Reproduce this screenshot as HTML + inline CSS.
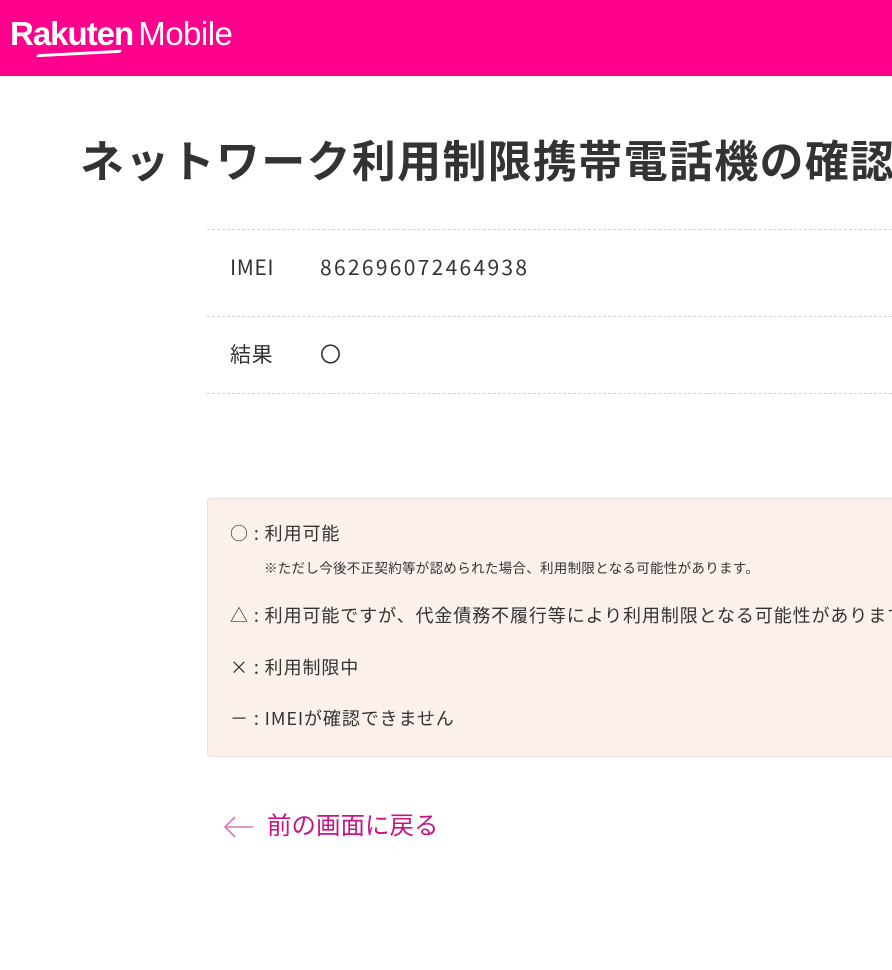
<!DOCTYPE html>
<html><head><meta charset="utf-8"><style>
body{margin:0;width:892px;height:970px;overflow:hidden;background:#fff;font-family:"Noto Sans CJK JP","Liberation Sans",sans-serif;color:#333}
.hd{height:76px;background:#ff008c;position:relative}
.logo{position:absolute;left:10px;top:15px;color:#fff;font-size:33px;letter-spacing:-1px;white-space:nowrap;font-family:"Liberation Sans",sans-serif}
.logo b{font-weight:bold}
.logo span{font-weight:normal;margin-left:5px;letter-spacing:-0.5px}
.sw{position:absolute;left:38px;top:52px;width:82px;height:3px;background:#fff;transform:skewX(-30deg) rotate(-3deg);border-radius:2px}
h1{position:absolute;left:80px;top:128px;margin:0;font-size:44px;font-weight:bold;white-space:nowrap;color:#333;letter-spacing:1.3px;line-height:60px}
.row{position:absolute;left:207px;right:0;border-top:1px dashed #d4d4d4;font-size:21px;letter-spacing:0.6px;line-height:30px}
.row .k{position:absolute;left:23px}
.row .v{position:absolute;left:113px}
.box{position:absolute;left:207px;top:498px;width:700px;height:257px;background:#fbf1ea;border:1px solid #f0e0d4;border-radius:4px;font-size:18px;color:#333;letter-spacing:0.9px;line-height:26px}
.box div{position:absolute;left:22px;white-space:nowrap}
.back{position:absolute;left:267px;top:808px;color:#c71585;font-size:24.5px;white-space:nowrap;line-height:34px}
.arr{position:absolute;left:223px;top:814px}
</style></head><body>
<div class="hd"><div class="logo"><b>Rakuten</b><span>Mobile</span></div><div class="sw"></div></div>
<h1>ネットワーク利用制限携帯電話機の確認</h1>
<div class="row" style="top:229px;height:87px"><span class="k" style="top:22px">IMEI</span><span class="v" style="top:22px;letter-spacing:2.3px">862696072464938</span></div>
<div class="row" style="top:316px;height:77px"><span class="k" style="top:22px">結果</span><span class="v" style="top:22px">〇</span></div>
<div class="row" style="top:393px;height:0"></div>
<div class="box">
<div style="top:21px">○ : 利用可能</div>
<div style="top:55px;left:56px;font-size:13.5px;letter-spacing:0.3px">※ただし今後不正契約等が認められた場合、利用制限となる可能性があります。</div>
<div style="top:103px">△ : 利用可能ですが、代金債務不履行等により利用制限となる可能性があります。</div>
<div style="top:155px">× : 利用制限中</div>
<div style="top:206px">－ : IMEIが確認できません</div>
</div>
<svg class="arr" width="32" height="26" viewBox="0 0 32 26"><path d="M12 3 L2 13 L12 23 M2 13 H30" fill="none" stroke="#d77ab5" stroke-width="1.6"/></svg>
<div class="back">前の画面に戻る</div>
</body></html>
